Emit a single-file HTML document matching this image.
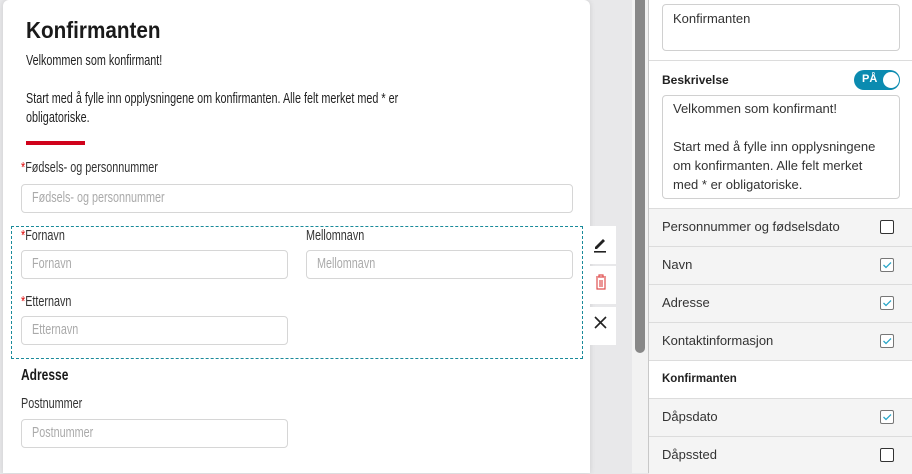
<!DOCTYPE html>
<html><head><meta charset="utf-8"><style>
*{box-sizing:border-box;margin:0;padding:0}
body{width:912px;height:473px;overflow:hidden;background:#e8e8ea;font-family:"Liberation Sans",sans-serif;position:relative;color:#222}
.a{position:absolute;white-space:nowrap}
.c{display:inline-block;transform:scaleX(.72);transform-origin:left center}
.card{position:absolute;left:3px;top:0;width:587px;height:473px;background:#fff;border-radius:6px 6px 0 0;box-shadow:0 0 6px rgba(0,0,0,.12)}
.inp{position:absolute;border:1px solid #d6d6d6;border-radius:4px;height:29px;background:#fff}
.ph{color:#aaa;font-size:15px}
.lbl{font-size:15px;color:#333}
.r{color:#e01010}
.rp{position:absolute;left:648px;top:0;width:264px;height:473px;background:#fff;border-left:1px solid #c8c8c8}
.row{position:absolute;left:0;width:264px;height:38px;background:#f4f4f4;border-top:1px solid #dcdcdc;font-size:13px;color:#333}
.row span{position:absolute;left:13px;top:10px}
.cb{position:absolute;left:231px;top:11px;width:14px;height:14px;border:1.5px solid #333;border-radius:2px;background:#fff}
.cb.on{border:1px solid #777}
.ta{position:absolute;left:13px;width:238px;border:1px solid #d0d0d0;border-radius:4px;font-size:13px;color:#333;line-height:22px;padding:2px 10px}
</style></head><body>
<div class="card"></div>
<div class="a" style="left:26px;top:17px;font-size:23px;font-weight:bold;color:#1a1a1a"><span class="c" style="transform:scaleX(.9)">Konfirmanten</span></div>
<div class="a" style="left:26px;top:52px;font-size:15px"><span class="c">Velkommen som konfirmant!</span></div>
<div class="a" style="left:26px;top:90px;font-size:15px"><span class="c">Start med å fylle inn opplysningene om konfirmanten. Alle felt merket med * er</span></div>
<div class="a" style="left:26px;top:109px;font-size:15px"><span class="c">obligatoriske.</span></div>
<div class="a" style="left:26px;top:141px;width:59px;height:4px;background:#d0021b"></div>
<div class="a lbl" style="left:21px;top:159px"><span class="c"><span class="r">*</span>Fødsels- og personnummer</span></div>
<div class="inp" style="left:21px;top:184px;width:552px"></div>
<div class="a ph" style="left:32px;top:189px"><span class="c">Fødsels- og personnummer</span></div>
<div class="a" style="left:11px;top:226px;width:572px;height:133px;border:1px dashed #1a8a9a"></div>
<div class="a lbl" style="left:21px;top:227px"><span class="c"><span class="r">*</span>Fornavn</span></div>
<div class="a lbl" style="left:306px;top:227px"><span class="c">Mellomnavn</span></div>
<div class="inp" style="left:21px;top:250px;width:267px"></div>
<div class="a ph" style="left:32px;top:255px"><span class="c">Fornavn</span></div>
<div class="inp" style="left:306px;top:250px;width:267px"></div>
<div class="a ph" style="left:317px;top:255px"><span class="c">Mellomnavn</span></div>
<div class="a lbl" style="left:21px;top:293px"><span class="c"><span class="r">*</span>Etternavn</span></div>
<div class="inp" style="left:21px;top:316px;width:267px"></div>
<div class="a ph" style="left:32px;top:321px"><span class="c">Etternavn</span></div>
<div class="a" style="left:21px;top:367px;font-size:16px;font-weight:bold;color:#1a1a1a"><span class="c" style="transform:scaleX(.75)">Adresse</span></div>
<div class="a lbl" style="left:21px;top:395px"><span class="c">Postnummer</span></div>
<div class="inp" style="left:21px;top:419px;width:267px"></div>
<div class="a ph" style="left:32px;top:424px"><span class="c">Postnummer</span></div>
<!-- tool buttons -->
<div class="a" style="left:585px;top:226px;width:31px;height:38px;background:#fff"></div>
<div class="a" style="left:585px;top:266px;width:31px;height:38px;background:#fff"></div>
<div class="a" style="left:585px;top:307px;width:31px;height:38px;background:#fff"></div>
<svg class="a" style="left:590px;top:230px" width="22" height="30" viewBox="0 0 22 30"><path d="M5 17 L13 9 L15 11 L7 19 L5 19 Z" fill="#222"/><rect x="4" y="21" width="12" height="1.6" fill="#222"/></svg>
<svg class="a" style="left:590px;top:270px" width="22" height="26" viewBox="0 0 22 26"><path d="M6 7h10M9 7V5h4v2M7 8v11h8V8M10 10v7M12 10v7" stroke="#e05050" stroke-width="1.2" fill="none"/></svg>
<svg class="a" style="left:590px;top:312px" width="22" height="24" viewBox="0 0 22 24"><path d="M5 5L16 16M16 5L5 16" stroke="#222" stroke-width="1.6"/></svg>
<!-- scrollbar -->
<div class="a" style="left:632px;top:0;width:16px;height:473px;background:#f2f2f2"></div>
<div class="a" style="left:635px;top:0;width:10px;height:353px;background:#888;border-radius:0 0 5px 5px"></div>
<!-- right panel -->
<div class="rp">
<div class="ta" style="top:4px;height:47px;line-height:20px;padding-top:4px">Konfirmanten</div>
<div class="a" style="left:0;top:60px;width:264px;border-top:1px solid #dcdcdc"></div>
<div class="a" style="left:13px;top:73px;font-size:12px;font-weight:bold;color:#222">Beskrivelse</div>
<div class="a" style="left:205px;top:70px;width:46px;height:20px;border-radius:10px;background:#0b8bb0"></div>
<div class="a" style="left:213px;top:73px;font-size:11px;font-weight:bold;color:#fff">PÅ</div>
<div class="a" style="left:234px;top:72px;width:16px;height:16px;border-radius:8px;background:#fff"></div>
<div class="ta" style="top:95px;height:104px;line-height:19px;padding-top:3px">Velkommen som konfirmant!<br><br>Start med å fylle inn opplysningene<br>om konfirmanten. Alle felt merket<br>med * er obligatoriske.</div>
<div class="row" style="top:208px"><span>Personnummer og fødselsdato</span><div class="cb"></div></div>
<div class="row" style="top:246px"><span>Navn</span><div class="cb on"><svg width="12" height="12" style="position:absolute;left:0;top:0"><path d="M2.5 6l2.5 2.5 5-5" stroke="#2aa6c8" fill="none" stroke-width="1.3"/></svg></div></div>
<div class="row" style="top:284px"><span>Adresse</span><div class="cb on"><svg width="12" height="12" style="position:absolute;left:0;top:0"><path d="M2.5 6l2.5 2.5 5-5" stroke="#2aa6c8" fill="none" stroke-width="1.3"/></svg></div></div>
<div class="row" style="top:322px"><span>Kontaktinformasjon</span><div class="cb on"><svg width="12" height="12" style="position:absolute;left:0;top:0"><path d="M2.5 6l2.5 2.5 5-5" stroke="#2aa6c8" fill="none" stroke-width="1.3"/></svg></div></div>
<div class="row" style="top:360px;background:#fff"><span style="font-size:11.5px;font-weight:bold;color:#222;top:12px">Konfirmanten</span></div>
<div class="row" style="top:398px"><span>Dåpsdato</span><div class="cb on"><svg width="12" height="12" style="position:absolute;left:0;top:0"><path d="M2.5 6l2.5 2.5 5-5" stroke="#2aa6c8" fill="none" stroke-width="1.3"/></svg></div></div>
<div class="row" style="top:436px"><span>Dåpssted</span><div class="cb"></div></div>
</div>
</body></html>
